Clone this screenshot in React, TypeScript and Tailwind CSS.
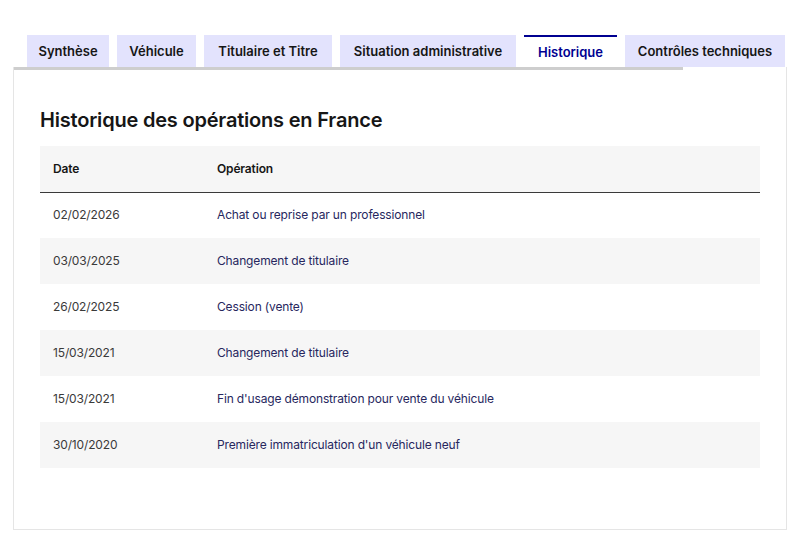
import React from 'react';

const tabs = [
  { label: 'Synthèse', w: 'w-[82px]' },
  { label: 'Véhicule', w: 'w-[79px]' },
  { label: 'Titulaire et Titre', w: 'w-[128px]' },
  { label: 'Situation administrative', w: 'w-[176px]' },
  { label: 'Historique', w: 'w-[93px]' },
  { label: 'Contrôles techniques', w: 'w-[160px]' },
];

const rows = [
  { date: '02/02/2026', op: 'Achat ou reprise par un professionnel' },
  { date: '03/03/2025', op: 'Changement de titulaire' },
  { date: '26/02/2025', op: 'Cession (vente)' },
  { date: '15/03/2021', op: 'Changement de titulaire' },
  { date: '15/03/2021', op: "Fin d'usage démonstration pour vente du véhicule" },
  { date: '30/10/2020', op: "Première immatriculation d'un véhicule neuf" },
];

const App: React.FC = () => {
  return (
    <div
      className="min-h-[553px] bg-white pt-[35px] px-[13px]"
      style={{ fontFamily: 'Inter, "Noto Sans", sans-serif' }}
    >
      <div className="flex gap-2 pl-[14px]">
        {tabs.map((t) => {
          const active = t.label === 'Historique';
          return (
            <div
              key={t.label}
              className={
                active
                  ? `${t.w} h-8 pt-[1px] shrink-0 whitespace-nowrap flex items-center justify-center bg-white border-t-2 border-[#000091] text-[#000091] text-[13px] font-semibold`
                  : `${t.w} h-8 pt-[2px] shrink-0 whitespace-nowrap flex items-center justify-center bg-[#e3e3fd] text-[#161616] text-[13px] font-semibold`
              }
            >
              {t.label}
            </div>
          );
        })}
      </div>
      <div className="w-[774px] border-x border-b border-[#e5e5e5]">
        <div className="h-[3px] w-[669px] bg-[#cecece]" />
        <div className="pl-[26px] pr-[26px] pt-[36px] pb-[61px]">
          <h2 className="text-[20px] leading-7 font-semibold tracking-[-0.2px] text-[#161616]">
            Historique des opérations en France
          </h2>
          <table className="mt-[12px] w-full border-collapse text-[12px] tracking-[-0.15px]">
            <thead>
              <tr className="bg-[#f6f6f6] border-b border-[#3a3a3a]">
                <th className="h-[46px] w-[164px] pl-[13px] text-left font-semibold text-[#161616]">
                  Date
                </th>
                <th className="h-[46px] pl-[13px] text-left font-semibold text-[#161616]">
                  Opération
                </th>
              </tr>
            </thead>
            <tbody>
              {rows.map((r, i) => (
                <tr key={i} className={i % 2 === 1 ? 'bg-[#f6f6f6]' : 'bg-white'}>
                  <td className="h-[46px] pl-[13px] text-[#3a3a3a]">{r.date}</td>
                  <td className="h-[46px] pl-[13px] text-[#27275e]">{r.op}</td>
                </tr>
              ))}
            </tbody>
          </table>
        </div>
      </div>
    </div>
  );
};

export default App;
